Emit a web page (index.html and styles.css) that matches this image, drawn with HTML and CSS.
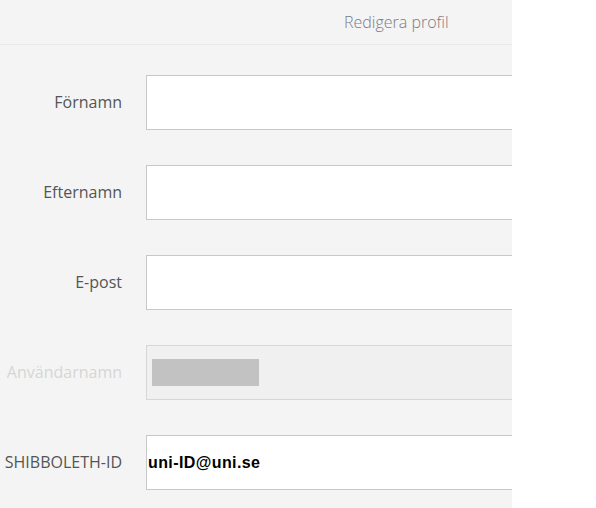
FILE: index.html
```html
<!DOCTYPE html>
<html lang="sv">
<head>
  <meta charset="UTF-8">
  <meta name="viewport" content="width=device-width, initial-scale=1.0">
  <title>Redigera profil</title>
  <link rel="stylesheet" href="styles.css">
</head>
<body>
  <div class="panel">
    <div class="panel-header">
      <span class="panel-title">Redigera profil</span>
    </div>

    <form class="profile-form">
      <div class="form-row">
        <label for="first-name">Förnamn</label>
        <input type="text" id="first-name">
      </div>

      <div class="form-row">
        <label for="last-name">Efternamn</label>
        <input type="text" id="last-name">
      </div>

      <div class="form-row">
        <label for="email">E-post</label>
        <input type="text" id="email">
      </div>

      <div class="form-row disabled">
        <label for="username">Användarnamn</label>
        <div class="field field-disabled" id="username">
          <span class="redacted"></span>
        </div>
      </div>

      <div class="form-row">
        <label for="shib-id">SHIBBOLETH-ID</label>
        <input type="text" id="shib-id" class="field-bold" value="uni-ID@uni.se">
      </div>
    </form>
  </div>
</body>
</html>
```

FILE: styles.css
```css
body {
  margin: 0;
  background-color: #fff;
  font-family: "Open Sans", sans-serif;
}

.panel {
  width: 512px;
  height: 508px;
  background-color: #f4f4f4;
  overflow: hidden;
}

.panel-header {
  height: 45px;
  box-sizing: border-box;
  border-bottom: 1px solid #e9e9e9;
  display: flex;
  align-items: center;
  padding-left: 344px;
}

.panel-title {
  font-size: 16px;
  font-weight: 300;
  color: #7a7a86;
}

.profile-form {
  padding-top: 30px;
  display: flex;
  flex-direction: column;
  gap: 35px;
}

.form-row {
  display: flex;
  align-items: center;
  gap: 24px;
}

.form-row label {
  width: 122px;
  flex-shrink: 0;
  text-align: right;
  font-size: 16px;
  color: #555;
  margin-top: -2px;
}

.form-row.disabled label {
  color: #d6d6d6;
}

.form-row input,
.field {
  flex-shrink: 0;
  width: 420px;
  height: 55px;
  box-sizing: border-box;
  border: 1px solid #c8c8c8;
  background-color: #fff;
  padding: 0 1px;
  margin: 0;
  outline: none;
}

.field-disabled {
  background-color: #f0f0f0;
  border-color: #d6d6d6;
  display: flex;
  align-items: center;
  padding-left: 5px;
}

.redacted {
  display: block;
  width: 107px;
  height: 27px;
  background-color: #c2c2c2;
}

.field-bold {
  font-family: "Liberation Sans", Arial, sans-serif;
  font-weight: bold;
  font-size: 16px;
  letter-spacing: 0.4px;
  color: #000;
}
```
